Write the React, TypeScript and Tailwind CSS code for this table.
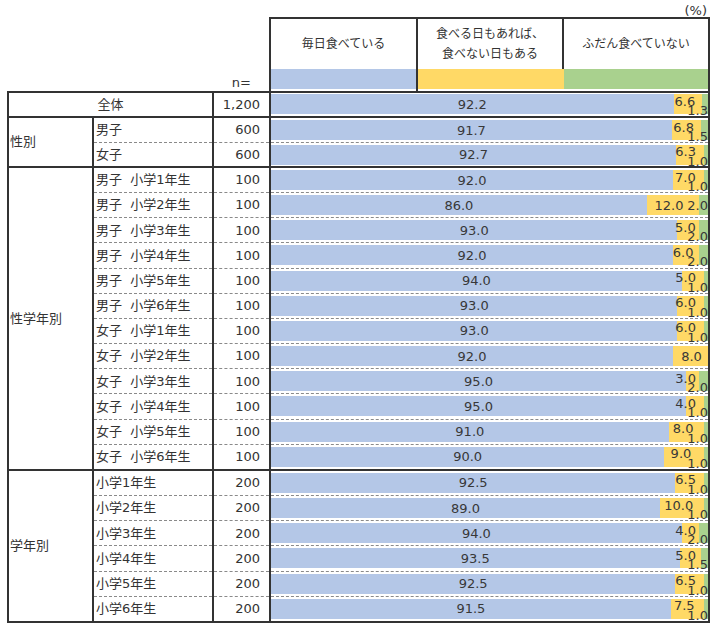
import React from "react";

type Row = {
  label: string;
  n: string;
  v: [number, number, number];
  mode?: "stack" | "inline" | "solo";
};

const W = 437;
const DIGIT = 8.27;
const DOT = 4.13;

const total: Row = { label: "全体", n: "1,200", v: [92.2, 6.6, 1.3] };

const groups: { title: string; tall: boolean; rows: Row[] }[] = [
  {
    title: "性別",
    tall: false,
    rows: [
      { label: "男子", n: "600", v: [91.7, 6.8, 1.5] },
      { label: "女子", n: "600", v: [92.7, 6.3, 1.0] },
    ],
  },
  {
    title: "性学年別",
    tall: true,
    rows: [
      { label: "男子  小学1年生", n: "100", v: [92.0, 7.0, 1.0] },
      { label: "男子  小学2年生", n: "100", v: [86.0, 12.0, 2.0], mode: "inline" },
      { label: "男子  小学3年生", n: "100", v: [93.0, 5.0, 2.0] },
      { label: "男子  小学4年生", n: "100", v: [92.0, 6.0, 2.0] },
      { label: "男子  小学5年生", n: "100", v: [94.0, 5.0, 1.0] },
      { label: "男子  小学6年生", n: "100", v: [93.0, 6.0, 1.0] },
      { label: "女子  小学1年生", n: "100", v: [93.0, 6.0, 1.0] },
      { label: "女子  小学2年生", n: "100", v: [92.0, 8.0, 0], mode: "solo" },
      { label: "女子  小学3年生", n: "100", v: [95.0, 3.0, 2.0] },
      { label: "女子  小学4年生", n: "100", v: [95.0, 4.0, 1.0] },
      { label: "女子  小学5年生", n: "100", v: [91.0, 8.0, 1.0] },
      { label: "女子  小学6年生", n: "100", v: [90.0, 9.0, 1.0] },
    ],
  },
  {
    title: "学年別",
    tall: true,
    rows: [
      { label: "小学1年生", n: "200", v: [92.5, 6.5, 1.0] },
      { label: "小学2年生", n: "200", v: [89.0, 10.0, 1.0] },
      { label: "小学3年生", n: "200", v: [94.0, 4.0, 2.0] },
      { label: "小学4年生", n: "200", v: [93.5, 5.0, 1.5] },
      { label: "小学5年生", n: "200", v: [92.5, 6.5, 1.0] },
      { label: "小学6年生", n: "200", v: [91.5, 7.5, 1.0] },
    ],
  },
];

const fmt = (n: number) => n.toFixed(1);
const textWidth = (s: string) => s.length * DIGIT - (DIGIT - DOT);

function Bar({ v, mode = "stack" }: { v: [number, number, number]; mode?: Row["mode"] }) {
  const sum = v[0] + v[1] + v[2];
  const b = (v[0] / sum) * W;
  const y = (v[1] / sum) * W;
  const g = (v[2] / sum) * W;
  const yc = b + y / 2;
  const yText = fmt(v[1]);
  const yw = textWidth(yText);

  let yLeft = Math.min(yc - 3, 425 - yw / 2);
  if (mode === "inline") yLeft = yc - 4;
  if (mode === "solo") yLeft = yc + 1;

  return (
    <div className="relative flex h-[20px] w-[437px] text-[#383838]">
      <div className="h-full bg-[#b4c7e7]" style={{ width: b }} />
      <div className="h-full bg-[#ffd966]" style={{ width: y }} />
      <div className="h-full bg-[#a9d18e]" style={{ width: g }} />
      <span className="absolute top-[3.5px] -translate-x-1/2 leading-[13px]" style={{ left: b / 2 }}>
        {fmt(v[0])}
      </span>
      {mode === "stack" && (
        <>
          <span className="absolute top-[0.5px] -translate-x-1/2 leading-[13px]" style={{ left: yLeft }}>
            {yText}
          </span>
          <span className="absolute right-0 top-[10px] leading-[13px]">{fmt(v[2])}</span>
        </>
      )}
      {mode === "inline" && (
        <>
          <span className="absolute top-[3.5px] -translate-x-1/2 leading-[13px]" style={{ left: yLeft }}>
            {yText}
          </span>
          <span className="absolute right-0 top-[3.5px] leading-[13px]">{fmt(v[2])}</span>
        </>
      )}
      {mode === "solo" && (
        <span className="absolute top-[3.5px] -translate-x-1/2 leading-[13px]" style={{ left: yLeft }}>
          {yText}
        </span>
      )}
    </div>
  );
}

// row heights follow the reference: the small groups sit a little tighter
function cellClass(i: number, tall: boolean) {
  if (tall) return i === 0 ? "h-[24.17px]" : "h-[25.17px] border-t border-dashed border-[#8a8a8a]";
  return i === 0 ? "h-[23.5px]" : "h-[24.5px] border-t border-dashed border-[#8a8a8a]";
}

function Group({ title, tall, rows }: { title: string; tall: boolean; rows: Row[] }) {
  return (
    <div className="flex border-t-2 border-[#333]">
      <div className="flex w-[85px] shrink-0 items-center border-r-2 border-[#333] pl-[1px]">{title}</div>
      <div className="w-[120px] shrink-0 border-r-2 border-[#333]">
        {rows.map((r, i) => (
          <div key={i} className={`${cellClass(i, tall)} flex items-center whitespace-pre pl-[2px]`}>
            {r.label}
          </div>
        ))}
      </div>
      <div className="w-[57px] shrink-0 border-r-2 border-[#333]">
        {rows.map((r, i) => (
          <div key={i} className={`${cellClass(i, tall)} flex items-center justify-end pr-[9px]`}>
            {r.n}
          </div>
        ))}
      </div>
      <div className="w-[437px] shrink-0">
        {rows.map((r, i) => (
          <div key={i} className={`${cellClass(i, tall)} pt-[2px]`}>
            <Bar v={r.v} mode={r.mode} />
          </div>
        ))}
      </div>
    </div>
  );
}

export default function App() {
  return (
    <div className="h-[632px] w-[718px] overflow-hidden bg-white font-['DejaVu_Sans','Noto_Sans_CJK_JP',sans-serif] text-[13px] text-[#333]">
      <div className="flex h-[17px] items-start justify-end pr-[11px] pt-[4px] leading-[13px]">(%)</div>

      {/* legend header */}
      <div className="flex h-[74px]">
        <div className="flex w-[269px] shrink-0 items-end justify-end pb-[1px] pr-[18px] leading-[15px]">n=</div>
        <div className="flex w-[441px] shrink-0 border-x-2 border-t-2 border-[#333] text-[12px]">
          <div className="w-[147px] shrink-0 border-r-2 border-[#333]">
            <div className="flex h-[50px] items-center justify-center">毎日食べている</div>
            <div className="h-[20px] bg-[#b4c7e7]" />
          </div>
          <div className="w-[146px] shrink-0">
            <div className="flex h-[50px] items-center justify-center border-r-2 border-[#333] text-center leading-[20px]">
              食べる日もあれば、
              <br />
              食べない日もある
            </div>
            <div className="h-[20px] bg-[#ffd966]" />
          </div>
          <div className="flex-1">
            <div className="flex h-[50px] items-center justify-center">ふだん食べていない</div>
            <div className="h-[20px] bg-[#a9d18e]" />
          </div>
        </div>
      </div>

      {/* table */}
      <div className="ml-[7px] w-[703px] border-2 border-[#333]">
        <div className="flex h-[23px]">
          <div className="flex w-[205px] shrink-0 items-center justify-center border-r-2 border-[#333]">{total.label}</div>
          <div className="flex w-[57px] shrink-0 items-center justify-end border-r-2 border-[#333] pr-[9px]">{total.n}</div>
          <div className="w-[437px] shrink-0 pt-[1px]">
            <Bar v={total.v} />
          </div>
        </div>
        {groups.map((g) => (
          <Group key={g.title} title={g.title} tall={g.tall} rows={g.rows} />
        ))}
      </div>
    </div>
  );
}
